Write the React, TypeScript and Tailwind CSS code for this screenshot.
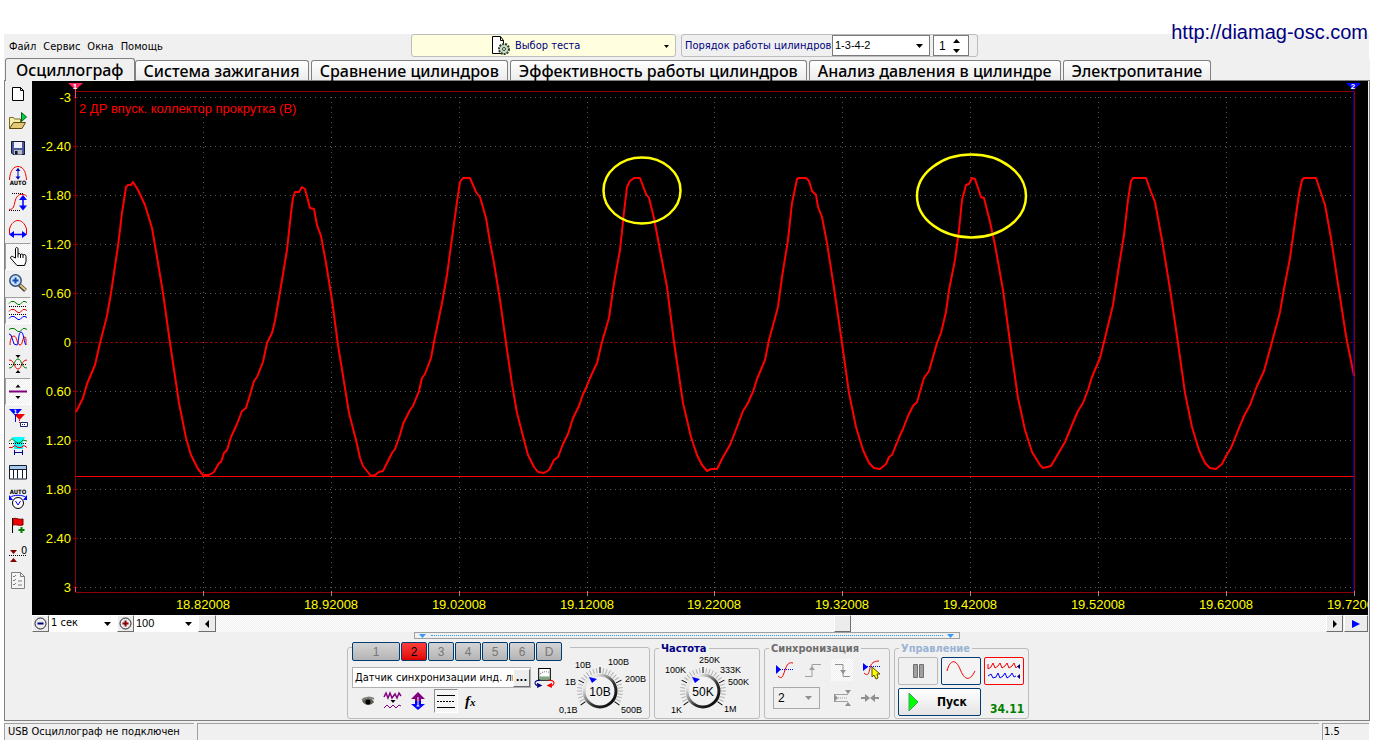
import { useState } from "react";
import type { ReactNode } from "react";
import clsx from "clsx";

const MENU = ["Файл", "Сервис", "Окна", "Помощь"];

const TABS = [
  "Осциллограф",
  "Система зажигания",
  "Сравнение цилиндров",
  "Эффективность работы цилиндров",
  "Анализ давления в цилиндре",
  "Электропитание",
];

const X_TICKS = [
  { x: 203, label: "18.82008" },
  { x: 331, label: "18.92008" },
  { x: 459, label: "19.02008" },
  { x: 587, label: "19.12008" },
  { x: 714, label: "19.22008" },
  { x: 842, label: "19.32008" },
  { x: 970, label: "19.42008" },
  { x: 1098, label: "19.52008" },
  { x: 1226, label: "19.62008" },
  { x: 1354, label: "19.72008" },
];

const Y_TICKS = ["-3", "-2.40", "-1.80", "-1.20", "-0.60", "0", "0.60", "1.20", "1.80", "2.40", "3"];

const SIGNAL =
  "76,412 83,398 87,384 95,365 100,343 107,316 111,293 118,246 122,213 126,187 128,185 131,185 133,182 138,190 145,205 152,228 157,257 163,293 170,343 179,403 186,438 191,455 198,469 203,475 209,475 214,472 219,463 221,462 224,453 227,450 231,437 237,424 242,411 246,408 250,395 254,381 257,377 263,362 267,343 272,333 275,321 280,292 287,250 291,213 293,198 295,192 299,192 302,187 305,189 310,208 314,209 317,225 321,236 326,263 332,300 338,345 344,382 349,413 356,440 360,458 363,466 371,476 375,475 379,472 383,471 387,463 392,453 395,449 400,435 403,424 410,410 413,406 419,391 422,378 425,374 431,358 434,342 442,303 447,275 452,238 457,202 460,182 463,178 470,178 476,192 480,197 486,218 490,242 494,263 500,300 506,343 512,384 517,413 524,440 528,455 534,467 538,472 544,473 549,470 554,460 558,457 563,444 568,434 573,418 579,406 583,394 586,388 590,378 597,363 602,342 609,318 614,283 620,250 624,212 627,187 630,181 634,178 640,178 646,194 649,198 654,218 659,245 667,287 674,342 683,403 691,437 697,455 702,465 707,471 711,469 717,469 723,457 730,445 737,427 743,411 748,403 751,396 753,392 757,379 765,360 769,340 778,307 782,277 788,240 792,203 796,184 797,179 799,178 806,178 809,181 812,191 816,195 818,207 822,217 827,243 834,288 842,343 849,393 856,427 863,450 869,463 874,468 880,469 886,464 889,457 892,455 896,445 901,433 903,429 908,416 913,406 917,402 924,378 929,371 937,343 941,333 946,312 949,290 955,260 959,230 962,200 966,185 969,184 972,178 975,179 981,197 984,198 990,222 995,245 1003,290 1010,342 1018,398 1025,430 1032,452 1040,465 1043,468 1051,466 1058,454 1065,442 1072,425 1078,411 1083,403 1088,390 1092,377 1100,358 1105,338 1113,305 1118,272 1124,235 1128,200 1131,181 1133,178 1146,178 1151,192 1155,202 1162,240 1170,289 1178,343 1185,393 1192,427 1199,450 1205,463 1210,468 1216,469 1222,464 1226,456 1231,448 1237,433 1244,416 1250,405 1257,386 1264,371 1272,342 1280,312 1284,289 1290,258 1295,222 1299,194 1302,180 1304,178 1316,178 1320,190 1325,205 1331,238 1338,284 1346,336 1354,376";

/* ---------- toolbar glyphs, all on an 18 x 18 grid ---------- */

const Glyph = ({ children, size = "size-[18px]" }: { children: ReactNode; size?: string }) => (
  <svg viewBox="0 0 18 18" className={clsx(size, "shrink-0 overflow-visible")} fill="none" stroke="none" aria-hidden="true">
    {children}
  </svg>
);

const TOOLS: { name: string; pressed?: boolean; icon: ReactNode }[] = [
  {
    name: "Новый",
    icon: <path d="M3.500 2.500h8l3 3v10h-11zM11.500 2.500v3h3" fill="#fff" stroke="#000" />,
  },
  {
    name: "Открыть",
    icon: (
      <>
        <path d="M.5 16.500v-11h4l1 1.500h6v3" fill="#f5f0a8" stroke="#7a6a20" />
        <path d="M.5 16.500l4-6h12l-3.500 6z" fill="#e2c878" stroke="#5c4a10" />
        <path d="M12.500.5v9l5-4.500z" fill="#00d040" stroke="#006020" />
      </>
    ),
  },
  {
    name: "Сохранить",
    icon: (
      <>
        <path d="M2.500 2.500h13v13h-11.500l-1.500-1.500z" fill="#4a5a9a" stroke="#141830" />
        <path d="M5 3h8v6H5z" fill="#eef0ff" />
        <path d="M5 11h8v4.500H5z" fill="#b8bcc8" />
        <path d="M6 12h2.500v3.500H6z" fill="#101020" />
      </>
    ),
  },
  {
    name: "Автомасштаб",
    icon: (
      <>
        <path d="M.5 14C1 4 5 .5 9 .5S17 4 17.500 14" stroke="#f00000" />
        <path d="M9 2.500v10" stroke="#0000c0" />
        <path d="M6.500 5 9 2l2.500 3zM6.500 10.500 9 13.500l2.500-3z" fill="#0000c0" />
        <text x="9" y="19" textAnchor="middle" fontSize="6" fontWeight="700" fill="#000">AUTO</text>
      </>
    ),
  },
  {
    name: "Масштаб по амплитуде",
    icon: (
      <>
        <path d="M3 .5h11M0 17.500h11" stroke="#000" strokeDasharray="1 1" />
        <path d="M0 16.500c5 0 5-4 6-8s3-8 8-7c2 0 3 1 4 2" stroke="#f00000" />
        <path d="M14 4v11" stroke="#0000ff" strokeWidth="1.500" />
        <path d="M10 7l4-5 4 5zM10 12.500l4 5 4-5z" fill="#0000ff" />
      </>
    ),
  },
  {
    name: "Масштаб по времени",
    icon: (
      <>
        <path d="M.5 14V9C2 3 6 .5 9 .5S16 3 17.500 9v5" stroke="#f00000" />
        <path d="M3 14.500h12" stroke="#0000ff" strokeWidth="1.500" />
        <path d="M5 11v7l-5-3.500zM13 11v7l5-3.500z" fill="#0000ff" />
      </>
    ),
  },
  {
    name: "Рука",
    pressed: true,
    icon: (
      <path
        d="M6.500 11V2c0-2 2.500-2 2.500 0V7.500c0-1.500 2.500-1.500 2.500.5 0-1.500 2.500-1.500 2.500.5 0-1.500 3-1.500 3 1v5l-1.500 4H8l-6.500-7.500c0-2 2-2 3-1z M9 7.500v3M11.500 8v3M14 8.500v2.500"
        fill="#fff"
        stroke="#000"
      />
    ),
  },
  {
    name: "Лупа",
    icon: (
      <>
        <path d="M10.500 11l6 5.500" stroke="#404040" strokeWidth="4" />
        <path d="M11 11l5.500 5" stroke="#e0c878" strokeWidth="2" />
        <circle cx="6.500" cy="6.500" r="5.700" fill="#c8e4ff" stroke="#34507c" strokeWidth="1.500" />
        <path d="M6.500 3.500v6M3.500 6.500h6" stroke="#1848b0" strokeWidth="2" />
      </>
    ),
  },
  {
    name: "Раздельные каналы",
    pressed: true,
    icon: (
      <>
        <path d="M0 2.500l2-2h3l4 3h2l3-3h2l2 1" stroke="#008000" />
        <path d="M0 10.500l2-2h3l4 3h2l3-3h2l2 1" stroke="#f00000" />
        <path d="M0 17.500l2-2h3l4 3h2l3-3h2l2 1" stroke="#0000ff" />
        <path d="M0 5.500h18M0 13.500h18" stroke="#000" strokeDasharray="1 1" />
      </>
    ),
  },
  {
    name: "Совмещённые каналы",
    icon: (
      <>
        <path d="M0 1.500l2-1h3l4 3h2l3-3h2l2 1" stroke="#008000" />
        <path d="M1 17c0-4 1-9 4-9s3 9 6 9 2-8 5-8c1 0 1 2 1 8" stroke="#f00000" />
        <path d="M0 6l2 1 3 9 3 1c2-1 1-13 4-13s3 12 5 13" stroke="#0000ff" />
      </>
    ),
  },
  {
    name: "Наложение",
    icon: (
      <>
        <path d="M0 5c6 0 5 9 9 9s3-9 9-9" stroke="#f00000" />
        <path d="M0 13c6 0 5-9 9-9s3 9 9 9" stroke="#008000" />
        <path d="M0 9.500h18" stroke="#000" strokeDasharray="1 1" />
        <path d="M6.500 0h5L9 3zM6.500 18h5L9 15z" fill="#000" />
      </>
    ),
  },
  {
    name: "Нулевая линия",
    pressed: true,
    icon: (
      <>
        <path d="M0 9.500h18" stroke="#800080" strokeWidth="2" />
        <path d="M6.500 5.500h5L9 2.500zM6.500 14h5L9 17z" fill="#000" />
      </>
    ),
  },
  {
    name: "Маркеры",
    icon: (
      <>
        <path d="M5 5h11l-5.500 6z" fill="#f00000" />
        <path d="M0 0h13L6.500 7z" fill="#0000ff" />
        <path d="M6.500 5v8" stroke="#0000ff" />
        <path d="M10.500 9v6" stroke="#f00000" strokeDasharray="1 1" />
        <text x="6.500" y="5" textAnchor="middle" fontSize="6" fontWeight="700" fill="#fff">1</text>
        <path d="M11.500 13.500h7v4h-7z" fill="#fff" stroke="#202070" />
        <path d="M13 15.500h4" stroke="#202070" strokeDasharray="1 1" />
      </>
    ),
  },
  {
    name: "Окно сравнения",
    icon: (
      <>
        <path d="M5 1h9v12H5zM3 1h13l-2 4H5z" fill="#00ffff" />
        <path d="M0 5.500l3-3 3 3 3 1.500h2l3-3 4 1" stroke="#008000" />
        <path d="M0 11.500h3l3-2 3 2h3l3-2 3 2" stroke="#f00000" />
        <path d="M0 7.500h18" stroke="#000" strokeDasharray="1 1" />
        <path d="M5.500 14v5M13.500 14v5M6 16.500h7" stroke="#000080" />
      </>
    ),
  },
  {
    name: "Таблица",
    icon: (
      <>
        <path d="M.5 2.500h17v13.500H.500z" fill="#fff" stroke="#101c30" />
        <path d="M1 3h16v3H1z" fill="#a8c8ec" />
        <path d="M.5 6.500h17M4.500 6.500v9M8.500 6.500v9M13.500 6.500v9" stroke="#101c30" />
      </>
    ),
  },
  {
    name: "Автоизмерение",
    icon: (
      <>
        <text x="9" y="4" textAnchor="middle" fontSize="6" fontWeight="700" fill="#000">AUTO</text>
        <path d="M1 7.500c3-3 13-3 16 0" stroke="#0000ff" />
        <path d="M0 5v5h4zM18 5v5h-4z" fill="#0000ff" />
        <circle cx="9" cy="13" r="5.500" fill="#fff" stroke="#000" />
        <path d="M6.500 11 9 15l2.500-4" stroke="#0000ff" />
      </>
    ),
  },
  {
    name: "Флаг",
    icon: (
      <>
        <path d="M3.500 1v15" stroke="#000" />
        <path d="M4 2c3-2 4 1 10 0v6c-5 1-7-1-10 0z" fill="#f00000" stroke="#800000" />
        <path d="M12.500 10v6M9.500 13h6" stroke="#008000" strokeWidth="2" />
      </>
    ),
  },
  {
    name: "Ноль",
    icon: (
      <>
        <path d="M1 6h7L4.500 10zM1 18h7l-3.500-4z" fill="#800000" />
        <path d="M0 11.500h18" stroke="#000" strokeDasharray="1 1" />
        <text x="12" y="10" fontSize="11" fill="#000">0</text>
      </>
    ),
  },
  {
    name: "Отчёт",
    icon: (
      <>
        <path d="M2.500 1.500h9l4 4v12h-13zM11.500 1.500v4h4" fill="#f4f4f4" stroke="#808080" />
        <path d="M4 5l1 1 2-2M4 9l1 1 2-2M4 13l1 1 2-2M9 10h4M9 14h4" stroke="#808080" />
      </>
    ),
  },
];

const Triangle = ({ d, color = "#000" }: { d: string; color?: string }) => (
  <svg viewBox="0 0 8 8" className="pointer-events-none size-2 shrink-0" aria-hidden="true">
    <path d={d} fill={color} />
  </svg>
);

const DOWN = "M0 2h7L3.500 6z";
const LEFT = "M6 0v8L2 4z";
const RIGHT = "M2 0v8l4-4z";

/* ---------- header ---------- */

const Header = () => (
  <header className="flex h-[25px] items-start">
    <nav className="flex w-[407px] shrink-0 gap-[7px] pl-[5px] pt-[6px]">
      {MENU.map((item) => (
        <button key={item} type="button" className="leading-[14px]">
          {item}
        </button>
      ))}
    </nav>
    <button
      type="button"
      className="flex h-[23px] w-[265px] items-center rounded-[3px] border border-[#bdbdbd] bg-[#ffffdf] pl-[79px] pr-1 text-[#000080]"
    >
      <svg viewBox="0 0 20 20" className="size-5" aria-hidden="true">
        <path d="M1.500.5h8l3 4v13h-11zM9.500.5v4h3" fill="#fff" stroke="#000" />
        <circle cx="13" cy="13" r="5" fill="#c8dcc0" stroke="#304030" strokeWidth="2" strokeDasharray="2 1" />
        <circle cx="13" cy="13" r="1.500" fill="#fff" stroke="#304030" />
      </svg>
      <span className="ml-1 flex-1 pt-0.5 text-left">Выбор теста</span>
      <Triangle d="M1 3h5L3.500 6z" />
    </button>
    <div className="ml-[5px] flex h-[23px] items-center rounded-[3px] border border-[#bdbdbd] pl-[3px] pr-2">
      <label htmlFor="firing" className="w-[147px] whitespace-nowrap pt-0.5 text-[#000080]">
        Порядок работы цилиндров
      </label>
      <div className="flex h-[21px] w-[98px] items-center border border-[#7a7a7a] bg-white pl-0.5 pr-[5px]">
        <select id="firing" className="min-w-0 flex-1 appearance-none font-['Liberation_Sans',sans-serif] text-[11px] outline-none">
          <option>1-3-4-2</option>
          <option>1-2-4-3</option>
        </select>
        <Triangle d={DOWN} />
      </div>
      <div className="ml-[3px] flex h-[21px] w-[36px] items-center border border-[#7a7a7a] bg-white pl-[5px]">
        <input
          aria-label="Номер цилиндра"
          defaultValue="1"
          className="w-[14px] font-['Liberation_Sans',sans-serif] text-[12px] outline-none"
        />
        <div className="flex flex-col gap-0.5">
          <button type="button" aria-label="Больше">
            <Triangle d="M0 6h7L3.500 2z" />
          </button>
          <button type="button" aria-label="Меньше">
            <Triangle d={DOWN} />
          </button>
        </div>
      </div>
    </div>
  </header>
);

const Tabs = () => {
  const [active, setActive] = useState(0);
  return (
    <div role="tablist" className="flex h-[22px] items-end gap-[2px] border-b border-[#808080] pl-px font-['Noto_Sans',sans-serif] text-[16px] font-medium">
      {TABS.map((tab, i) => (
        <button
          key={tab}
          type="button"
          role="tab"
          aria-selected={i === active}
          onClick={() => setActive(i)}
          className={clsx(
            "whitespace-nowrap rounded-t-[3px] border border-b-0 border-[#808080] leading-[18px]",
            i === active
              ? "-mr-[2px] -mb-px h-[23px] bg-[#f0f0f0] px-[10px]"
              : "h-[20px] bg-linear-to-b from-white to-[#ececec] px-2",
          )}
        >
          {tab}
        </button>
      ))}
    </div>
  );
};

/* ---------- oscillogram ---------- */

const Oscillogram = () => (
  <svg
    viewBox="32 81 1336 534"
    className="block h-auto w-full bg-black font-['Liberation_Sans',sans-serif] text-[13px]"
    role="img"
    aria-label="Осциллограмма"
  >
    <g stroke="#5a5a5a" strokeDasharray="1 4">
      {Y_TICKS.map((t, i) => t !== "0" && <path key={t} d={`M80 ${97.5 + i * 49}H1354`} />)}
      {X_TICKS.slice(0, -1).map((t) => (
        <path key={t.x} d={`M${t.x + 0.5} 97V592`} />
      ))}
    </g>
    <path d="M80 342.500H1354" stroke="#8b0000" strokeDasharray="3 2" />
    <path d="M75.500 91.500H1354.500V592.500H75.500z" fill="none" stroke="#8b0000" />
    <g stroke="#8b0000">
      {Y_TICKS.map((t, i) => (
        <path key={t} d={`M73 ${97.5 + i * 49}H78`} />
      ))}
    </g>
    <g stroke="#909090">
      {X_TICKS.map((t) => (
        <path key={t.x} d={`M${t.x + 0.5} 591V596`} />
      ))}
    </g>
    <g fill="#ffff00" textAnchor="end">
      {Y_TICKS.map((t, i) => (
        <text key={t} x="71" y={102 + i * 49}>
          {t}
        </text>
      ))}
    </g>
    <g fill="#ffff00" textAnchor="middle">
      {X_TICKS.map((t) => (
        <text key={t.x} x={t.x} y="609">
          {t.label}
        </text>
      ))}
    </g>
    <text x="79" y="113" fill="#ff0000">
      2 ДР впуск. коллектор прокрутка (В)
    </text>

    <path d="M76 476.500H1354" stroke="#ff0000" />
    <polyline points={SIGNAL} fill="none" stroke="#ff0000" strokeWidth="2" strokeLinejoin="round" />

    <g fill="none" stroke="#ffff00" strokeWidth="2.500">
      <ellipse cx="642" cy="190.500" rx="38.500" ry="33" />
      <ellipse cx="971.500" cy="196" rx="54.500" ry="41.500" />
    </g>

    <path d="M68 83h15l-7.500 7z" fill="#ff2060" />
    <path d="M75.500 89v9M75.500 587v5" stroke="#ff4080" />
    <path d="M1346 83h15l-7.500 7z" fill="#0000ff" />
    <path d="M1353.500 89v503" stroke="#0000ff" strokeOpacity="0.600" />
    <g fill="#fff" fontSize="8" fontWeight="700" textAnchor="middle">
      <text x="75" y="89">1</text>
      <text x="1353" y="89">2</text>
    </g>
  </svg>
);

const RAISED = "border border-white border-r-[#6e6e6e] border-b-[#6e6e6e] bg-[#ececec]";
const DITHER = "bg-[repeating-conic-gradient(#ffffff_0_25%,#eeeeee_0_50%)] bg-[length:2px_2px]";

const RangeButton = ({ label, color, d }: { label: string; color: string; d: string }) => (
  <button type="button" aria-label={label} className={clsx("flex size-[17px] items-center justify-center", RAISED)}>
    <svg viewBox="0 0 13 13" className="size-[13px] shrink-0" fill="none">
      <circle cx="6.500" cy="6.500" r="5.500" stroke="#202020" />
      <path d={d} stroke={color} strokeWidth="2" />
    </svg>
  </button>
);

const ScrollRow = () => (
  <div className="flex h-[17px] items-stretch">
    <RangeButton label="Уменьшить развёртку" color="#000080" d="M3.500 6.500h6" />
    <div className="flex w-[68px] items-center bg-white pl-0.5 pr-[5px]">
      <select aria-label="Развёртка" className="min-w-0 flex-1 appearance-none outline-none">
        <option>1 сек</option>
        <option>2 сек</option>
      </select>
      <Triangle d={DOWN} />
    </div>
    <RangeButton label="Увеличить развёртку" color="#900000" d="M3.500 6.500h6M6.500 3.500v6" />
    <div className="flex w-[64px] items-center bg-white pl-0.5 pr-[5px]">
      <select aria-label="Масштаб" className="min-w-0 flex-1 appearance-none font-['Liberation_Sans',sans-serif] text-[11px] outline-none">
        <option>100</option>
        <option>200</option>
      </select>
      <Triangle d={DOWN} />
    </div>
    <button type="button" aria-label="Назад" className={clsx("flex w-[18px] items-center justify-center", RAISED)}>
      <Triangle d={LEFT} />
    </button>
    <div className={clsx("flex flex-1", DITHER)}>
      <div className="w-[55.7%]" />
      <div className={clsx("w-[17px]", RAISED)} />
    </div>
    <button type="button" aria-label="Вперёд" className={clsx("flex w-[17px] items-center justify-center", RAISED)}>
      <Triangle d={RIGHT} />
    </button>
    <button type="button" aria-label="Воспроизвести" className={clsx("ml-px flex w-6 items-center justify-center", RAISED)}>
      <Triangle d="M0 0v8l8-4z" color="#0000ff" />
    </button>
  </div>
);

/* ---------- bottom panels ---------- */

type KnobLabel = { text: string; x: number; y: number };

const Knob = ({ id, value, labels }: { id: string; value: string; labels: KnobLabel[] }) => (
  <svg viewBox="0 0 96 64" className="h-16 w-24 shrink-0 overflow-visible font-['Liberation_Sans',sans-serif]" role="img" aria-label={value}>
    <defs>
      <linearGradient id={id} x1="0" y1="0" x2="1" y2="1">
        <stop offset="0.200" stopColor="#e8e8e8" />
        <stop offset="0.600" stopColor="#303030" />
        <stop offset="1" stopColor="#000" />
      </linearGradient>
    </defs>
    {Array.from({ length: 29 }, (_, i) => (
      <path
        key={i}
        d={i % 7 === 0 ? "M48 13v6" : "M48 14v5"}
        stroke={i % 7 === 0 ? "#000" : "#b0b0b0"}
        transform={`rotate(${-126 + i * 9} 48 37)`}
      />
    ))}
    <circle cx="48" cy="37" r="16" fill="#f2f2f2" stroke={`url(#${id})`} strokeWidth="3" />
    <path d="M37 23l8 2-5 4z" fill="#0000ff" />
    <text x="48" y="42" textAnchor="middle" fontSize="12">
      {value}
    </text>
    {labels.map((l) => (
      <text key={l.text} x={l.x} y={l.y} fontSize="9">
        {l.text}
      </text>
    ))}
  </svg>
);

const VOLTS: KnobLabel[] = [
  { text: "0,1В", x: 7, y: 59 },
  { text: "1В", x: 13, y: 31 },
  { text: "10В", x: 23, y: 14 },
  { text: "100В", x: 56, y: 11 },
  { text: "200В", x: 73, y: 28 },
  { text: "500В", x: 69, y: 59 },
];

const RATES: KnobLabel[] = [
  { text: "1K", x: 16, y: 59 },
  { text: "100K", x: 10, y: 19 },
  { text: "250K", x: 44, y: 9 },
  { text: "333K", x: 65, y: 19 },
  { text: "500K", x: 73, y: 31 },
  { text: "1M", x: 69, y: 58 },
];

const CHANNELS = ["1", "2", "3", "4", "5", "6", "D"];

const ChannelPanel = () => {
  const [channel, setChannel] = useState("2");
  return (
    <section className="mt-[5px] flex h-[72px] w-[303px] rounded-[3px] border border-[#bcbcbc]">
      <div className="w-[213px] pl-1">
        <div className="-mt-[6px] flex w-[218px] gap-px bg-[#f0f0f0]">
          {CHANNELS.map((c) => (
            <button
              key={c}
              type="button"
              onClick={() => setChannel(c)}
              className={clsx(
                "h-[19px] rounded-[2px] border border-[#003c74] font-['Liberation_Sans',sans-serif] text-[12px] leading-[16px]",
                c === "1" ? "w-[48px]" : "w-[26px]",
                c === channel
                  ? "bg-linear-to-b from-[#ff3b3b] to-[#dd0000] text-black"
                  : "bg-linear-to-b from-[#d4d4d4] to-[#b4b4b4] text-[#777777]",
              )}
            >
              {c}
            </button>
          ))}
        </div>
        <div className="mt-[6px] flex items-center gap-1">
          <div className="flex h-[21px] w-[179px] items-center border border-[#b0b0b0] bg-white">
            <input
              aria-label="Датчик"
              defaultValue="Датчик синхронизации инд. линейный"
              className="min-w-0 flex-1 pl-0.5 pt-px outline-none"
            />
            <button type="button" className={clsx("h-[18px] w-[17px] font-bold leading-[10px]", RAISED)} aria-label="Выбрать датчик">
              ...
            </button>
          </div>
          <button type="button" aria-label="Прибор">
            <Glyph size="size-[19px]">
              <path d="M3.500.5h11v11h-11z" fill="#fff" stroke="#000" />
              <path d="M5 5.500l3-2 4 0 2 1" stroke="#808080" strokeDasharray="1 1" />
              <path d="M4 8h10v3H4z" fill="#80a880" />
              <path d="M5 11.500c-6 0-6 4-3 5" stroke="#000080" />
              <path d="M13 11.500c6 0 6 4 3 5" stroke="#f00000" />
              <path d="M2 14l5 2.500-5 2.500z" fill="#000080" />
              <path d="M16 14l-5 2.500 5 2.500z" fill="#f00000" />
            </Glyph>
          </button>
        </div>
        <div className="mt-px flex h-6 items-center gap-[7px] pl-[7px]">
          <button type="button" aria-label="Показать">
            <Glyph>
              <path d="M3 9c3-4 10-4 12 1-3 4-9 4-12-1z" fill="#606050" />
              <path d="M3 8c3-3 9-3 12-1" stroke="#808080" strokeWidth="2" />
              <circle cx="9" cy="10" r="2.500" fill="#000" />
            </Glyph>
          </button>
          <button type="button" aria-label="Сглаживание">
            <Glyph>
              <path d="M0 5l2-4 2 5 2-5 2 5 3-4 2 4 2-5 2 3" stroke="#800080" strokeWidth="1.500" />
              <path d="M0 16l3-3 3 3 3-3 3 3 3-3 2 1" stroke="#800080" />
              <path d="M6.500 8h5L9 11z" fill="#000" />
            </Glyph>
          </button>
          <button type="button" aria-label="Сдвиг">
            <Glyph>
              <path d="M9 0l7 7h-4v3H6V7H2z" fill="#800080" />
              <path d="M9 18l7-6h-4V9H6v3H2z" fill="#0000ff" />
              <path d="M9 5v9M7.500 14h3" stroke="#fff" />
            </Glyph>
          </button>
          <button
            type="button"
            aria-label="Линии"
            className={clsx("flex size-6 items-center justify-center border border-[#909090] border-r-white border-b-white", DITHER)}
          >
            <Glyph>
              <path d="M0 3.500h18M0 15.500h18" stroke="#000" />
              <path d="M0 9.500h18" stroke="#000" strokeDasharray="2 1" />
            </Glyph>
          </button>
          <button type="button" className="font-['Liberation_Serif',serif] text-[15px] font-bold italic leading-none">
            f<span className="text-[11px]">x</span>
          </button>
        </div>
      </div>
      <div className="-ml-[9px] pt-[6px]">
        <Knob id="volt-ring" value="10В" labels={VOLTS} />
      </div>
    </section>
  );
};

const Panel = ({ title, tone, width, children }: { title: string; tone: string; width: string; children: ReactNode }) => (
  <fieldset className={clsx("h-[77px] rounded-[3px] border border-[#bcbcbc]", width)}>
    <legend className={clsx("ml-1 h-3 px-0.5 text-[11px] font-bold leading-[14px]", tone)}>{title}</legend>
    {children}
  </fieldset>
);

const SyncPanel = () => (
  <Panel title="Синхронизация" tone="text-[#6e6e6e]" width="w-[126px]">
    <div className="flex items-center justify-between pl-[11px] pr-2 pt-[5px]">
      <button type="button" aria-label="По уровню">
        <Glyph>
          <path d="M2 15c4 4 5 0 7-6s4-8 8-7" stroke="#f00000" />
          <path d="M0 8.500h18" stroke="#0000ff" strokeDasharray="1 1" />
          <path d="M0 4v9l5-4.500z" fill="#0000ff" />
        </Glyph>
      </button>
      <button type="button" aria-label="По фронту">
        <Glyph>
          <path d="M1 15.500h7v-12h9" stroke="#a0a0a0" />
          <path d="M5 9l3-4 3 4z" fill="#a0a0a0" />
        </Glyph>
      </button>
      <button type="button" aria-label="По спаду" className={clsx("flex size-[22px] items-center justify-center", DITHER)}>
        <Glyph>
          <path d="M2 3.500h8v12h7" stroke="#909090" />
          <path d="M7 9l3 4 3-4z" fill="#909090" />
        </Glyph>
      </button>
      <button type="button" aria-label="Указать уровень">
        <Glyph>
          <path d="M1 12c4 4 5 0 6-5s4-7 9-7" stroke="#f00000" />
          <path d="M0 5.500h18" stroke="#0000ff" strokeDasharray="1 1" />
          <path d="M0 2v8l5-4z" fill="#0000ff" />
          <path d="M9 6v10l2-2 2 4 2-1-1-4h3z" fill="#ffff00" stroke="#504800" />
        </Glyph>
      </button>
    </div>
    <div className="flex items-center pl-2 pr-2 pt-[6px]">
      <div className="flex h-[22px] w-[47px] items-center border border-[#a8a8a8] pl-1 pr-1.5">
        <select aria-label="Канал синхронизации" className="min-w-0 flex-1 appearance-none font-['Liberation_Sans',sans-serif] text-[12px] outline-none">
          <option>2</option>
          <option>1</option>
        </select>
        <Triangle d={DOWN} color="#909090" />
      </div>
      <button type="button" aria-label="Уровень" className="ml-[14px]">
        <Glyph>
          <path d="M0 5.500h14M0 12.500h14" stroke="#a0a0a0" />
          <path d="M2 9h12" stroke="#a0a0a0" strokeDasharray="1 1" />
          <path d="M0 5v8l4-4zM11 1h6l-3 4zM11 17h6l-3-4z" fill="#909090" />
        </Glyph>
      </button>
      <button type="button" aria-label="Сжать" className="ml-[9px]">
        <Glyph>
          <path d="M0 9h6M12 9h6" stroke="#909090" strokeWidth="2" />
          <path d="M4 5v8l5-4zM14 5v8l-5-4z" fill="#909090" />
        </Glyph>
      </button>
    </div>
  </Panel>
);

const ControlPanel = () => (
  <Panel title="Управление" tone="text-[#9ab4d4]" width="w-[135px]">
    <div className="flex gap-[3px] pl-[3px] pt-[3px]">
      <button type="button" aria-label="Пауза" className="flex h-7 w-10 items-center justify-center rounded-[2px] border border-[#b8b8b8]">
        <Glyph>
          <path d="M4.500 2.500h4v13h-4zM10.500 2.500h4v13h-4z" fill="#a0a0a0" stroke="#707070" />
        </Glyph>
      </button>
      <button type="button" aria-label="Однократно" className="flex h-7 w-10 items-center justify-center rounded-[2px] border border-[#003c74] bg-[#f4f4f4]">
        <svg viewBox="0 0 30 20" className="h-5 w-[30px]" fill="none">
          <path d="M1 10C4-2 10-2 14 8s9 14 15 2" stroke="#f00000" />
        </svg>
      </button>
      <button type="button" aria-label="Непрерывно" className="flex h-7 w-10 items-center justify-center rounded-[2px] border border-[#ff0000] bg-[#f4f4f4]">
        <svg viewBox="0 0 34 20" className="h-5 w-[34px] shrink-0" fill="none">
          <path d="M1 3v5l3-2 2-4 2 5 3-2 2-3 2 5 3-2 2-3 2 5 3-2 2-3 2 5 2-2" stroke="#f00000" />
          <path d="M1 15l3-2 2 4 3-1 2-4 2 5 3-2 2-3 2 5 3-2 2-3 2 4 2-1" stroke="#0000ff" />
          <path d="M33 3v5l-3-2.500zM33 13v5l-3-2.500z" fill="#000080" />
        </svg>
      </button>
    </div>
    <div className="flex items-end pl-[3px] pt-[3px]">
      <button
        type="button"
        className="flex h-7 w-[83px] items-center rounded-[2px] border border-[#003c74] bg-linear-to-b from-white to-[#e4e4e4] pl-[9px] text-[12px] font-bold"
      >
        <svg viewBox="0 0 12 20" className="h-5 w-3" aria-hidden="true">
          <path d="M1 1v18l9-9z" fill="#00ff00" stroke="#40a060" />
        </svg>
        <span className="ml-[17px]">Пуск</span>
      </button>
      <output className="ml-[9px] text-[12px] font-bold leading-[14px] text-[#008000]">34.11</output>
    </div>
  </Panel>
);

export default function App() {
  return (
    <div className="relative bg-white pl-1 pr-3 pt-[34px] font-['DejaVu_Sans_Condensed','DejaVu_Sans',sans-serif] text-[11px] text-black">
      <div className="mr-px bg-[#f0f0f0]">
        <Header />
      </div>
      <a
        href="http://diamag-osc.com"
        className="absolute right-[14px] top-[20px] font-['Liberation_Sans',sans-serif] text-[20px] leading-6 text-[#000080]"
      >
        http://diamag-osc.com
      </a>

      <main className="bg-[#f0f0f0]">
        <Tabs />
        <div className="border-x border-b border-[#808080]">
          <div className="flex">
            <div role="toolbar" aria-label="Инструменты" className="flex w-[27px] shrink-0 flex-col">
              {TOOLS.map((tool) => (
                <button
                  key={tool.name}
                  type="button"
                  title={tool.name}
                  className={clsx(
                    "flex h-[27px] w-[26px] items-center justify-center border pb-0.5",
                    tool.pressed ? `border-[#a0a0a0] border-r-white border-b-white ${DITHER}` : "border-transparent",
                  )}
                >
                  <Glyph>{tool.icon}</Glyph>
                </button>
              ))}
            </div>
            <div className="min-w-0 flex-1 pr-px">
              <Oscillogram />
              <ScrollRow />
            </div>
          </div>

          <div className="flex flex-col items-center pb-px">
            <div className="flex h-[7px] w-[546px] items-center gap-1 border border-[#a0a0a0] px-1">
              <Triangle d={DOWN} color="#3898f8" />
              <div className="flex-1 border-t border-dotted border-[#3898f8]" />
              <Triangle d={DOWN} color="#3898f8" />
            </div>
            <div className="ml-0.5 mt-[3px] flex items-end gap-1">
              <ChannelPanel />
              <Panel title="Частота" tone="text-[#000080]" width="w-[106px]">
                <Knob id="rate-ring" value="50K" labels={RATES} />
              </Panel>
              <SyncPanel />
              <ControlPanel />
            </div>
          </div>
        </div>
      </main>

      <footer className="mr-px flex gap-[3px] bg-[#f0f0f0] pt-0.5 leading-4">
        <div className="h-[17px] w-[190px] border-l border-t border-[#a0a0a0] pl-[3px]">USB Осциллограф не подключен</div>
        <div className="flex-1 border-l border-t border-[#a0a0a0]" />
        <div className="w-[47px] border-l border-t border-[#a0a0a0] pl-px">1.5</div>
      </footer>
    </div>
  );
}
